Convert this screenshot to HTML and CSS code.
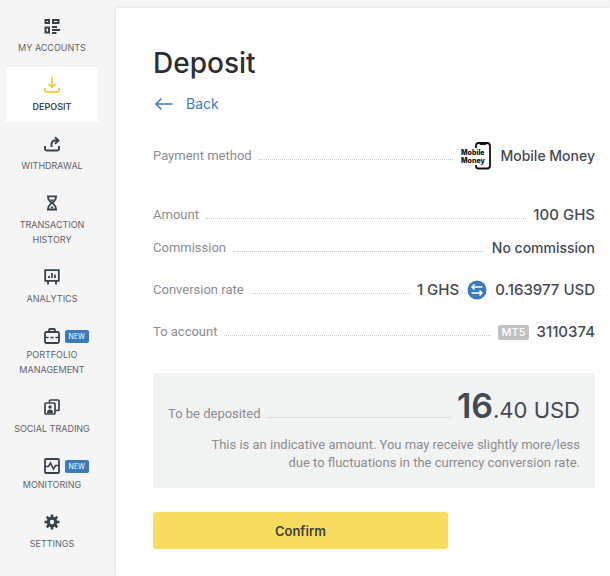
FILE: index.html
```
<!DOCTYPE html>
<html lang="en">
<head>
    <meta charset="UTF-8">
    <meta name="viewport" content="width=device-width, initial-scale=1.0">
    <title>Deposit</title>
    <link rel="stylesheet" href="styles.css">
</head>
<body>
    <nav class="sidebar">
        <a href="#" class="nav-item">
            <svg class="nav-icon" viewBox="0 0 16 16" fill="none" stroke="currentColor" stroke-width="2">
                <path d="M1.5 2h3.5v3h-3.5zM9 2h5.5v3h-5.5zM1.5 9.5h3.5v5h-3.5z"/>
                <path d="M8 9h5M8 12h8M8 15h4.500" stroke-width="1.900"/>
            </svg>
            <span>MY ACCOUNTS</span>
        </a>
        <a href="#" class="nav-item active">
            <svg class="nav-icon" viewBox="0 0 16 16" fill="none" stroke="currentColor" stroke-width="1.800">
                <path d="M8 0v10M4.500 7l3.500 3.200L11.500 7M1 11v2q0 2 2 2h10q2 0 2-2v-2"/>
            </svg>
            <span>DEPOSIT</span>
        </a>
        <a href="#" class="nav-item">
            <svg class="nav-icon" viewBox="0 0 16 16" fill="none" stroke="currentColor" stroke-width="1.900">
                <path d="M1 10v2.500q0 2 2 2h10q2 0 2-2V10"/>
                <path d="M7.500 11V8q0-3.500 3.500-3.500h3M11 1.200l3.500 3.300L11 7.800"/>
            </svg>
            <span>WITHDRAWAL</span>
        </a>
        <a href="#" class="nav-item">
            <svg class="nav-icon" viewBox="0 0 16 16" fill="none" stroke="currentColor" stroke-width="1.800">
                <path d="M3 1.300h10M3 14.700h10M4.300 1.500v2.500L7.300 8l-3 4v2.500M11.700 1.500v2.500L8.700 8l3 4v2.500"/>
                <path d="M6 4.500h4L8 7zM8 11l2 2.500h-4z" fill="currentColor" stroke="none"/>
            </svg>
            <span>TRANSACTION HISTORY</span>
        </a>
        <a href="#" class="nav-item">
            <svg class="nav-icon" viewBox="0 0 16 16" fill="none" stroke="currentColor" stroke-width="1.800">
                <path d="M1.200 1.200h13.600v10.600H1.200zM4 12v3.500M12 12v3.500"/>
                <path d="M5 9V7M8 9V4M11 9V5.500" stroke-width="1.700"/>
            </svg>
            <span>ANALYTICS</span>
        </a>
        <a href="#" class="nav-item has-badge">
            <svg class="nav-icon" viewBox="0 0 16 16" fill="none" stroke="currentColor" stroke-width="1.800">
                <rect x="1" y="4" width="14" height="11" rx="1.500"/>
                <path d="M5 4V2q0-1 1-1h4q1 0 1 1v2"/>
                <path d="M1 9.500h3.500M6.500 9.500h3M11.500 9.500H15" stroke-width="1.600"/>
            </svg>
            <span class="badge">NEW</span>
            <span>PORTFOLIO MANAGEMENT</span>
        </a>
        <a href="#" class="nav-item">
            <svg class="nav-icon" viewBox="0 0 16 16" fill="none" stroke="currentColor" stroke-width="1.700">
                <path d="M5.500 3.500V2q0-1 1-1h7.500q1 0 1 1v8.500q0 1-1 1h-2.500"/>
                <rect x="1" y="4" width="10" height="11" rx="1"/>
                <circle cx="6" cy="8" r="1.700" fill="currentColor" stroke="none"/>
                <path d="M3 14q0-3.500 3-3.500T9 14z" fill="currentColor" stroke="none"/>
            </svg>
            <span>SOCIAL TRADING</span>
        </a>
        <a href="#" class="nav-item has-badge">
            <svg class="nav-icon" viewBox="0 0 16 16" fill="none" stroke="currentColor" stroke-width="1.800">
                <rect x="1" y="1" width="14" height="14" rx="1"/>
                <path d="M2 8.500h2.500L6.500 5l3 6l2-3.500H14" stroke-width="1.600"/>
            </svg>
            <span class="badge">NEW</span>
            <span>MONITORING</span>
        </a>
        <a href="#" class="nav-item">
            <svg class="nav-icon" viewBox="0 0 16 16" fill="none" stroke="currentColor">
                <circle cx="8" cy="8" r="3.800" stroke-width="3.200"/>
                <path d="M8 .5v3M8 12.500v3M.5 8h3M12.500 8h3M2.700 2.700l2.100 2.100M11.200 11.200l2.100 2.100M2.700 13.300l2.100-2.100M11.200 4.800l2.100-2.100" stroke-width="2.600"/>
            </svg>
            <span>SETTINGS</span>
        </a>
    </nav>

    <main class="content">
        <h1>Deposit</h1>
        <a href="#" class="back">
            <svg class="back-icon" viewBox="0 0 18 12" fill="none" stroke="currentColor" stroke-width="1.500" stroke-linecap="round" stroke-linejoin="round">
                <path d="M17 6H1M6 1L1 6l5 5"/>
            </svg>
            Back
        </a>

        <dl class="details">
            <div class="row method">
                <dt>Payment method</dt>
                <dd class="words">
                    <svg class="mobile-money" viewBox="0 0 32 28" role="img" aria-label="Mobile Money">
                        <path d="M16 6V3.500Q16 1 18.500 1h8.500Q30 1 30 4v19.500q0 3-3 3h-8.500q-2.500 0-2.500-2.500v-1" fill="none" stroke="#111" stroke-width="1.800"/>
                        <path d="M19 1h8q-.5 2-2 2h-4q-1.500 0-2-2z" fill="#111"/>
                        <text x="1" y="13">Mobile</text>
                        <text x="1" y="21">Money</text>
                    </svg>
                    Mobile Money
                </dd>
            </div>
            <div class="row">
                <dt>Amount</dt>
                <dd>100 GHS</dd>
            </div>
            <div class="row commission">
                <dt>Commission</dt>
                <dd class="words">No commission</dd>
            </div>
            <div class="row">
                <dt>Conversion rate</dt>
                <dd>
                    1 GHS
                    <svg class="swap" viewBox="0 0 20 20" fill="none" stroke="#fff" stroke-width="1.500">
                        <circle cx="10" cy="10" r="9.500" fill="#3a7abd" stroke="none"/>
                        <path d="M15.500 7H5M7.500 4.500L5 7l2.500 2.500M4.500 13H15M12.500 10.500L15 13l-2.500 2.500"/>
                    </svg>
                    0.163977 USD
                </dd>
            </div>
            <div class="row">
                <dt>To account</dt>
                <dd><span class="platform">MT5</span>3110374</dd>
            </div>
        </dl>

        <section class="total">
            <div class="total-row">
                <span class="total-label">To be deposited</span>
                <span class="total-value"><strong>16</strong>.40 USD</span>
            </div>
            <p>This is an indicative amount. You may receive slightly more/less due to fluctuations in the currency conversion rate.</p>
        </section>

        <button type="button" class="confirm">Confirm</button>
    </main>
</body>
</html>
```

FILE: styles.css
```
* {
    box-sizing: border-box;
}

body {
    margin: 0;
    min-height: 100vh;
    display: flex;
    padding-top: 8px;
    background-color: #f5f5f5;
    color: #444a51;
    font-family: Inter, "Liberation Sans", sans-serif;
}

a {
    text-decoration: none;
}

.sidebar {
    flex: 0 0 116px;
    display: flex;
    flex-direction: column;
    gap: 4px;
    padding: 0 18px 0 6px;
}

.nav-item {
    position: relative;
    display: flex;
    flex-direction: column;
    align-items: center;
    gap: 6px;
    padding: 10px 0 8px;
    color: #5f6469;
    font-size: 9px;
    line-height: 15px;
    text-align: center;
}

.nav-item.has-badge {
    gap: 3px;
}

.nav-item.active {
    background-color: #fff;
    color: #41474d;
    font-weight: 600;
}

.nav-icon {
    width: 16px;
    height: 16px;
    color: #38424b;
}

.active .nav-icon {
    color: #f2cf45;
}

.badge {
    position: absolute;
    top: 12px;
    right: 9px;
    padding: 0 4px;
    border-radius: 2px;
    background-color: #3a7abd;
    color: #fff;
    font-size: 7px;
    line-height: 13px;
}

.content {
    flex: 1;
    min-width: 0;
    padding: 36px 15px 26px 37px;
    background-color: #fff;
    box-shadow: 0 0 4px rgba(0, 0, 0, 0.12);
}

h1 {
    margin: 0;
    color: #2c2e31;
    font-size: 28px;
    font-weight: 500;
    line-height: 38px;
}

.back {
    display: inline-flex;
    align-items: center;
    gap: 13px;
    margin-top: 12px;
    padding-left: 2px;
    color: #3a7abd;
    font-size: 14px;
    line-height: 20px;
}

.back-icon {
    width: 18px;
    height: 12px;
}

.details {
    margin: 28px 0 31px;
}

.row,
.total-row {
    display: flex;
    align-items: center;
}

.row {
    min-height: 20px;
    margin-bottom: 22px;
}

.row.method {
    margin-bottom: 35px;
}

.row:has(+ .commission) {
    margin-bottom: 13px;
}

dt,
.total-label {
    flex: 1;
    display: flex;
    align-items: baseline;
    color: #8b8d90;
    font-family: Roboto, "Liberation Sans", sans-serif;
    font-size: 13px;
    line-height: 20px;
}

/* dotted leader between label and value */
dt::after,
.total-label::after {
    content: "";
    flex: 1;
    margin: 0 7px;
    border-bottom: 1px dotted #c8c8c8;
}

dd {
    display: flex;
    align-items: center;
    gap: 8px;
    margin: 0;
    font-size: 15px;
    font-weight: 500;
    line-height: 20px;
}

dd.words {
    font-size: 14px;
}

.mobile-money {
    width: 32px;
    height: 28px;
}

.mobile-money text {
    fill: #111;
    font-size: 7px;
    font-weight: 800;
}

.swap {
    width: 20px;
    height: 20px;
}

.platform {
    padding: 0 3px;
    border-radius: 2px;
    background-color: #c1c1c1;
    color: #fff;
    font-size: 11px;
    font-weight: 500;
    line-height: 15px;
}

.total {
    padding: 13px 15px 16px;
    background-color: #f2f3f3;
}

.total-row {
    align-items: baseline;
}

.total-value {
    color: #444a51;
    font-size: 22px;
    line-height: 40px;
}

.total-value strong {
    font-size: 34px;
    font-weight: 600;
}

.total p {
    max-width: 376px;
    margin: 6px 0 0 auto;
    color: #8b8d90;
    font-family: Roboto, "Liberation Sans", sans-serif;
    font-size: 13px;
    line-height: 18px;
    text-align: right;
}

.confirm {
    display: block;
    width: 66.7%;
    height: 37px;
    margin-top: 24px;
    border: none;
    border-radius: 3px;
    background-color: #f8dd60;
    color: #41413a;
    font-family: inherit;
    font-size: 13px;
    font-weight: 600;
    cursor: pointer;
}
```
